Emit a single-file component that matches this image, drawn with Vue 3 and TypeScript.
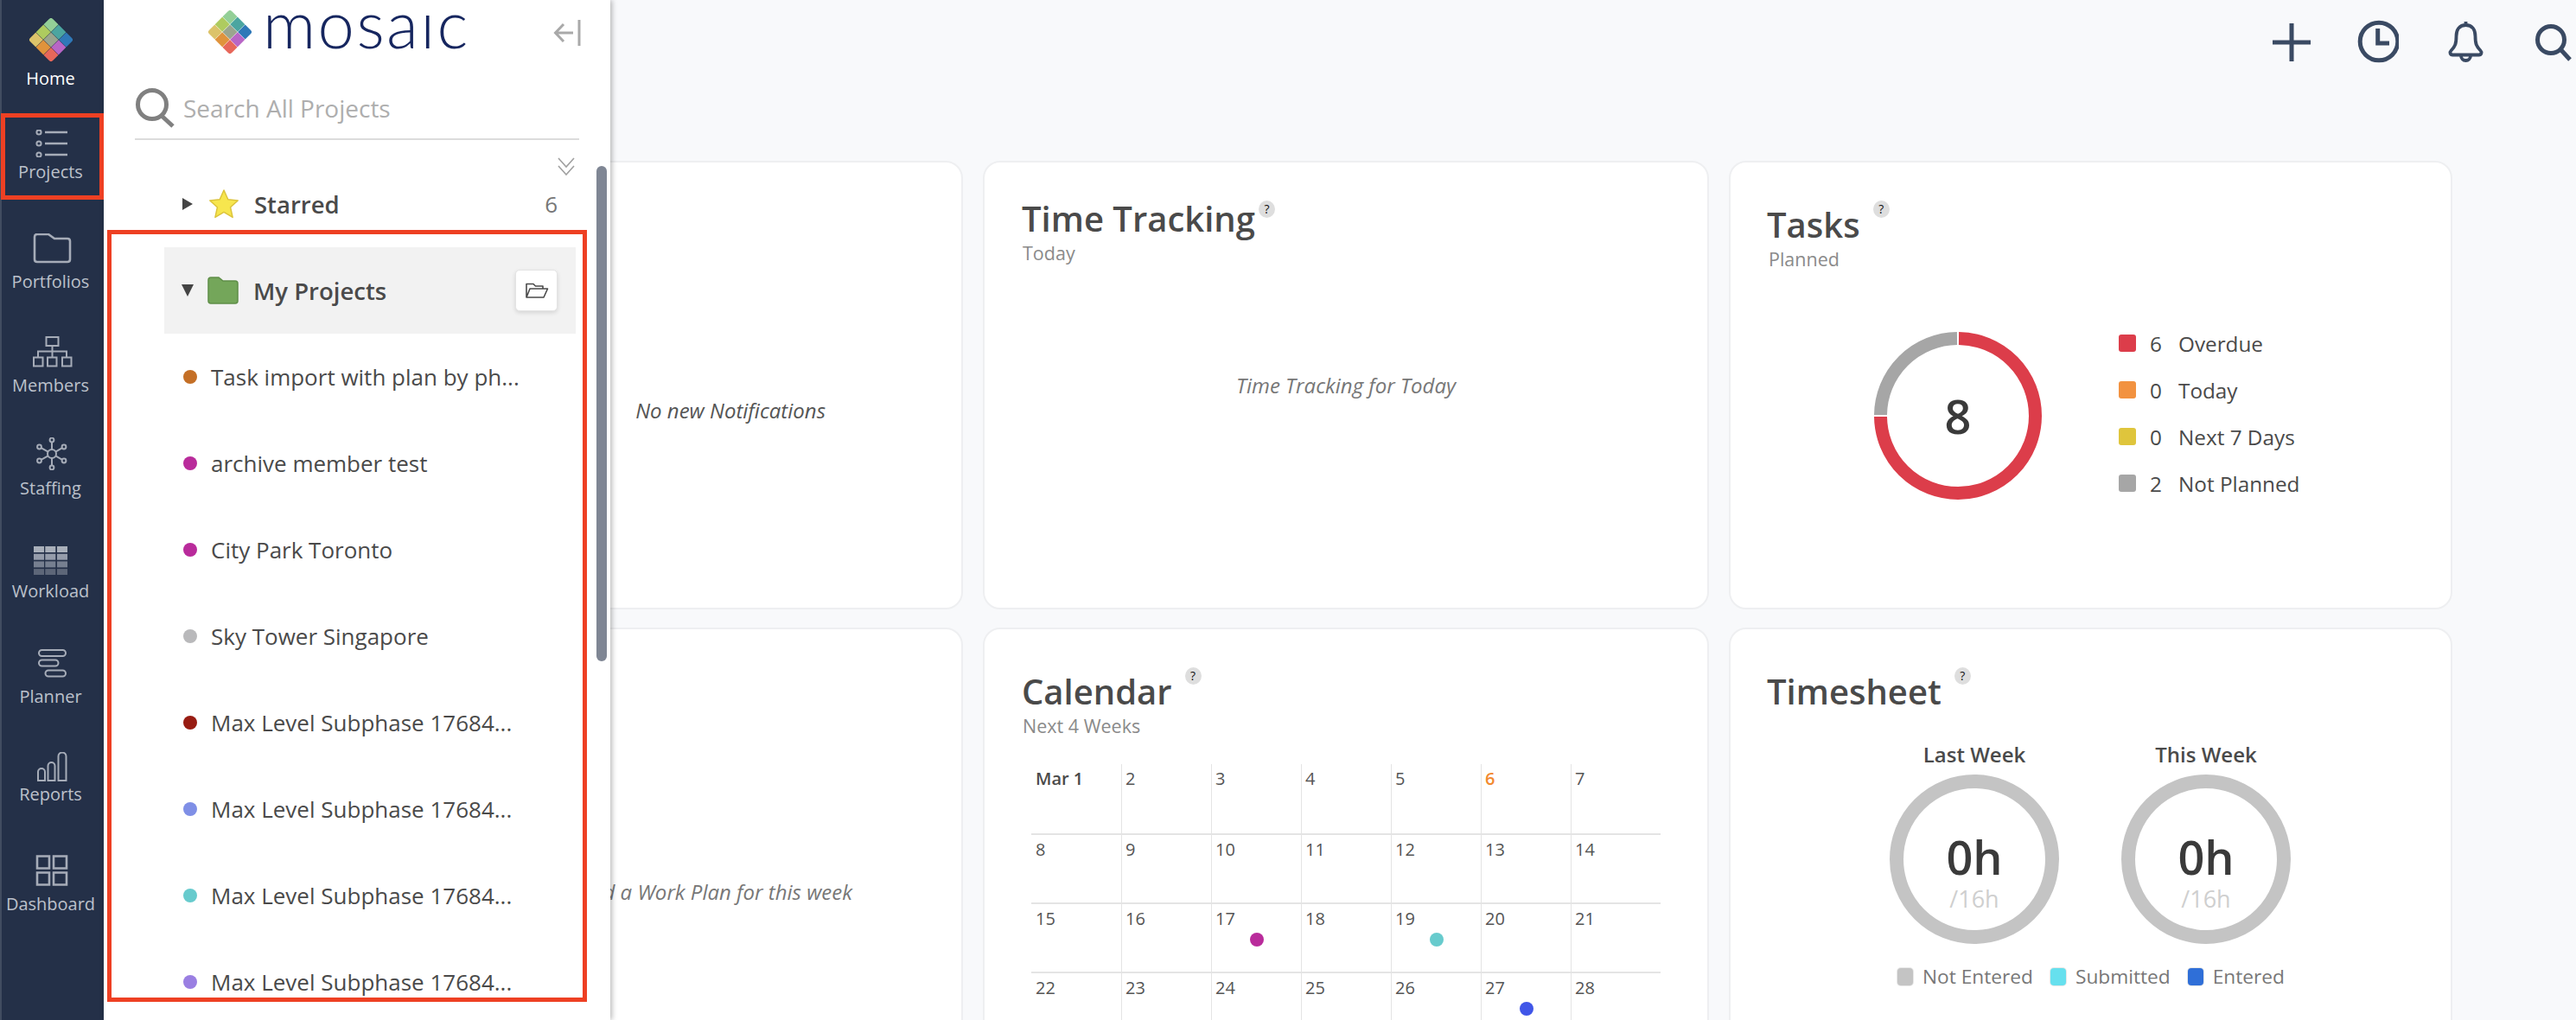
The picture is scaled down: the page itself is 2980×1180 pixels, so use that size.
<script setup lang="ts">
const logoCells = [
  ['#93cf97', '#4ba5a0', '#2f78b8'],
  ['#aecb5f', '#9aa58e', '#b866c6'],
  ['#dcc36a', '#e0933c', '#e7675a'],
].flatMap((row, r) => row.map((fill, c) => ({ fill, x: c * 22.5 + 0.3, y: r * 22.5 + 0.3 })))

const workload = [0, 1, 2, 3].flatMap((r) =>
  [0, 1, 2].map((c) => ({
    x: [39, 52.3, 66][c],
    y: 632 + r * 8.7,
    fill: ['#a9afba', '#959cab', '#767f90', '#5d6678'][r],
  })),
)

const projects = [
  { name: 'Task import with plan by ph...', color: '#c46f26' },
  { name: 'archive member test', color: '#b92b9b' },
  { name: 'City Park Toronto', color: '#b92b9b' },
  { name: 'Sky Tower Singapore', color: '#b9b9bb' },
  { name: 'Max Level Subphase 17684...', color: '#981c12' },
  { name: 'Max Level Subphase 17684...', color: '#7f8fe6' },
  { name: 'Max Level Subphase 17684...', color: '#67cbcd' },
  { name: 'Max Level Subphase 17684...', color: '#9a7fe2' },
]

const taskLegend = [
  { n: 6, label: 'Overdue', color: '#dc3d4a' },
  { n: 0, label: 'Today', color: '#f29240' },
  { n: 0, label: 'Next 7 Days', color: '#dfc53c' },
  { n: 2, label: 'Not Planned', color: '#a6a6a6' },
]

const sheetLegend = [
  { label: 'Not Entered', color: '#c4c4c4' },
  { label: 'Submitted', color: '#66e0ee' },
  { label: 'Entered', color: '#2f6fd8' },
]

const dots: Record<number, string> = { 17: '#b92b9b', 19: '#67cbcd', 27: '#4056e8' }
const days = Array.from({ length: 28 }, (_, i) => i + 1).map((d) => ({
  d,
  text: d === 1 ? 'Mar 1' : String(d),
  dot: dots[d],
}))
const weeks = ['Last Week', 'This Week']
</script>

<template>
  <div class="page">
    <nav class="nav">
      <div class="item n-home">
        <svg width="120" height="50" viewBox="0 0 120 50">
          <defs>
            <clipPath id="logoclip"><rect width="67.5" height="67.5" rx="7" /></clipPath>
          </defs>
          <svg x="34" y="0" width="50" height="50" viewBox="5 5 90 90">
            <g transform="translate(50 50) rotate(45) translate(-33.75 -33.75)" clip-path="url(#logoclip)">
              <rect v-for="(c, i) in logoCells" :key="i" :x="c.x" :y="c.y" width="21.9" height="21.9" :fill="c.fill" />
            </g>
          </svg>
        </svg>
        <span class="lbl home-lbl">Home</span>
      </div>
      <div class="item n-projects">
        <svg width="120" height="32" viewBox="0 150 120 32" class="ic">
          <circle cx="45" cy="153" r="2.6" /><circle cx="45" cy="166" r="2.6" /><circle cx="45" cy="179" r="2.6" />
          <path d="M52 153H78M52 166H78M52 179H78" stroke-width="2.6" />
        </svg>
        <span class="lbl">Projects</span>
      </div>
      <div class="item n-portfolios">
        <svg width="120" height="35" viewBox="0 270 120 35" class="ic">
          <path d="M40 274q0-3 3-3h13l7 5h15q3 0 3 3v21q0 3-3 3H43q-3 0-3-3z" stroke-width="2.6" />
        </svg>
        <span class="lbl">Portfolios</span>
      </div>
      <div class="item n-members">
        <svg width="120" height="36" viewBox="0 389 120 36" class="ic">
          <rect x="53.5" y="390" width="14" height="10" />
          <rect x="39" y="413.5" width="10.5" height="10" /><rect x="55" y="413.5" width="10.5" height="10" /><rect x="72" y="413.5" width="10.5" height="10" />
          <path d="M60.5 400V413.5M44 413.5V406.5H77V413.5" />
        </svg>
        <span class="lbl">Members</span>
      </div>
      <div class="item n-staffing">
        <svg width="120" height="38" viewBox="0 506 120 38" class="ic">
          <circle cx="60" cy="525" r="5" />
          <circle cx="60" cy="509" r="2.4" /><circle cx="60" cy="541" r="2.4" />
          <circle cx="45.5" cy="517" r="2.4" /><circle cx="74" cy="517" r="2.4" />
          <circle cx="45.5" cy="533" r="2.4" /><circle cx="74" cy="533" r="2.4" />
          <path d="M60 511.5V520M60 530V538.5M47.6 518.2L55.6 522.6M72 518.2L64.4 522.6M47.6 531.8L55.6 527.4M72 531.8L64.4 527.4" />
        </svg>
        <span class="lbl">Staffing</span>
      </div>
      <div class="item n-workload">
        <svg width="120" height="33" viewBox="0 632 120 33">
          <rect v-for="(c, i) in workload" :key="i" :x="c.x" :y="c.y" width="12" height="7" :fill="c.fill" />
        </svg>
        <span class="lbl">Workload</span>
      </div>
      <div class="item n-planner">
        <svg width="120" height="33" viewBox="0 751 120 33" class="ic">
          <rect x="45" y="752" width="31" height="7" rx="3.5" />
          <rect x="45" y="763.5" width="22.5" height="7" rx="3.5" />
          <rect x="52.5" y="775.5" width="23.5" height="7" rx="3.5" />
        </svg>
        <span class="lbl">Planner</span>
      </div>
      <div class="item n-reports">
        <svg width="120" height="34" viewBox="0 870 120 34" class="ic">
          <path d="M44 903V893a4 4 0 0 1 8 0V903zM55.5 903V886a4 4 0 0 1 8 0V903zM67.5 903V875a4.500 4.500 0 0 1 9 0V903z" />
        </svg>
        <span class="lbl">Reports</span>
      </div>
      <div class="item n-dashboard">
        <svg width="120" height="36" viewBox="0 989 120 36" class="ic">
          <path stroke-width="2.6" d="M43 990.500H57V1004.500H43zM62 990.500H77V1004.500H62zM43 1009.500H57V1023.500H43zM62 1009.500H77V1023.500H62z" />
        </svg>
        <span class="lbl">Dashboard</span>
      </div>
    </nav>

    <main class="main">
      <header class="top">
        <svg width="48" height="56" viewBox="0 0 48 56" class="tic"><path d="M24 7V51M2 29H46" /></svg>
        <svg width="48" height="56" viewBox="-1 0 48 56" class="tic"><circle cx="24" cy="28" r="21.800" /><path d="M22.700 13V30H36" /></svg>
        <svg width="48" height="56" viewBox="-1 0 48 56" class="tic bell">
          <path d="M24.500 9c-7.500 0-11 5.500-11 13 0 9-1.500 12-6 16.500-2 2-1 5 1.800 5h30.400c2.800 0 3.800-3 1.800-5-4.500-4.500-6-7.500-6-16.500 0-7.500-3.500-13-11-13z" />
          <path d="M19 44.500a5.500 5.500 0 0 0 11 0M24.500 5V9" />
        </svg>
        <svg width="48" height="56" viewBox="0 0 48 56" class="tic"><circle cx="24" cy="26" r="15.500" /><path d="M35 37L46 49" /></svg>
      </header>
      <section class="grid">
        <article class="card">
          <p class="empty notif">No new Notifications</p>
        </article>
        <article class="card tt">
          <div class="head"><h2>Time Tracking</h2><i class="q">?</i></div>
          <div class="sub">Today</div>
          <p class="empty none-today">Time Tracking for Today</p>
        </article>
        <article class="card">
          <div class="head gap"><h2>Tasks</h2><i class="q">?</i></div>
          <div class="sub">Planned</div>
          <div class="tasks">
            <div class="donut">
              <svg width="194" height="194" viewBox="0 0 194 194" fill="none" stroke-width="15">
                <path d="M7.500 96A89.500 89.500 0 0 1 96 7.500" stroke="#a6a6a6" />
                <path d="M98 7.500A89.500 89.500 0 1 1 7.500 98" stroke="#dc3d4a" />
              </svg>
              <span>8</span>
            </div>
            <ul class="legend">
              <li v-for="l in taskLegend" :key="l.label">
                <b class="sq" :style="{ background: l.color }"></b>
                <span class="num">{{ l.n }}</span>
                <span>{{ l.label }}</span>
              </li>
            </ul>
          </div>
        </article>
        <article class="card">
          <p class="empty plan">d a Work Plan for this week</p>
        </article>
        <article class="card calendar">
          <div class="head gap"><h2>Calendar</h2><i class="q">?</i></div>
          <div class="sub">Next 4 Weeks</div>
          <div class="cal">
            <div v-for="c in days" :key="c.d" class="cell" :class="{ first: c.d === 1, now: c.d === 6 }">
              <span>{{ c.text }}</span>
              <b v-if="c.dot" class="caldot" :style="{ background: c.dot }"></b>
            </div>
          </div>
        </article>
        <article class="card">
          <div class="head gap"><h2>Timesheet</h2><i class="q">?</i></div>
          <div class="weeks">
            <div v-for="w in weeks" :key="w" class="week">
              <div class="wlabel">{{ w }}</div>
              <div class="ring">
                <strong>0h</strong>
                <small>/16h</small>
              </div>
            </div>
          </div>
          <div class="slegend">
            <span v-for="l in sheetLegend" :key="l.label" class="sitem">
              <b class="ssq" :style="{ background: l.color }"></b>{{ l.label }}
            </span>
          </div>
        </article>
      </section>
    </main>

    <aside class="panel">
      <div class="brand">
        <svg width="50" height="50" viewBox="5 5 90 90">
          <g transform="translate(50 50) rotate(45) translate(-33.75 -33.75)" clip-path="url(#logoclip)">
            <rect v-for="(c, i) in logoCells" :key="i" :x="c.x" :y="c.y" width="21.9" height="21.9" :fill="c.fill" />
          </g>
        </svg>
        <span class="word" aria-label="mosaic">mosaıc</span>
        <svg class="collapse" width="34" height="32" viewBox="0 0 34 32" fill="none" stroke="#a9a9a9" stroke-width="3">
          <path d="M23 16H3M12 6L2.500 16L12 26" /><path d="M30 1V31" />
        </svg>
      </div>
      <div class="search">
        <svg width="46" height="46" viewBox="0 0 46 46" fill="none" stroke="#808080" stroke-width="5">
          <circle cx="20" cy="19" r="16.500" /><path d="M31 32L44 44" />
        </svg>
        <span>Search All Projects</span>
      </div>
      <div class="expand">
        <svg width="20" height="21" viewBox="0 0 20 21" fill="none" stroke="#a0a0a0" stroke-width="1.600">
          <path d="M1 1L10 11L19 1M1 10L10 20L19 10" />
        </svg>
      </div>
      <div class="starred">
        <b class="tri right"></b>
        <svg width="36" height="36" viewBox="0 0 36 36">
          <path d="M18 2l4.800 10.800 11.400 1.200-8.600 7.800 2.500 11.600L18 27.400 7.900 33.400l2.500-11.600L1.800 14l11.400-1.200z" fill="#f7e64e" stroke="#dcc43c" stroke-width="1.500" stroke-linejoin="round" />
        </svg>
        <span class="gname">Starred</span>
        <span class="count">6</span>
      </div>
      <div class="group">
        <b class="tri down"></b>
        <svg width="36" height="34" viewBox="0 0 36 34">
          <path d="M1 5q0-3 3-3h9l5 4h14q3 0 3 3v20q0 3-3 3H4q-3 0-3-3z" fill="#74a65a" stroke="#5f8f48" stroke-width="1.500" />
        </svg>
        <span class="gname">My Projects</span>
        <button class="open" type="button" aria-label="Open folder">
          <svg width="28" height="20" viewBox="0 0 28 20" fill="none" stroke="#4a4a4a" stroke-width="1.600" stroke-linejoin="round">
            <path d="M2 18V2.500h8l2.500 2.500H21V8M2 18L6 8H26.500L22 18z" />
          </svg>
        </button>
      </div>
      <ul class="list">
        <li v-for="(p, i) in projects" :key="i">
          <b class="pdot" :style="{ background: p.color }"></b>
          <span>{{ p.name }}</span>
        </li>
      </ul>
      <div class="thumb"></div>
    </aside>

    <div class="mark mark-nav"></div>
    <div class="mark mark-list"></div>
  </div>
</template>

<style>
html, body { margin: 0; background: #f8f9fb; }
</style>

<style scoped>
.page {
  position: relative;
  display: flex;
  width: 2980px;
  height: 1180px;
  overflow: hidden;
  background: #f8f9fb;
  font-family: "Open Sans", "Noto Sans", sans-serif;
  color: #4a4a4a;
}
svg { display: block; flex: none; }
ul { margin: 0; padding: 0; list-style: none; }

/* nav rail */
.nav {
  flex: none;
  width: 120px;
  box-sizing: border-box;
  background: #243048;
  box-shadow: inset 2px 0 0 #414c60;
  display: flex;
  flex-direction: column;
}
.item { display: flex; flex-direction: column; align-items: center; }
.ic { fill: none; stroke: #a6acb8; stroke-width: 2; }
.lbl { font-size: 20px; line-height: 28px; color: #bcc1cb; white-space: nowrap; margin-right: 3px; }
.home-lbl { color: #fff; }
.n-home { margin-top: 21px; } .n-home .lbl { margin-top: 6px; }
.n-projects { margin-top: 45px; } .n-projects .lbl { margin-top: 3px; }
.n-portfolios { margin-top: 57px; } .n-portfolios .lbl { margin-top: 7px; }
.n-members { margin-top: 49px; } .n-members .lbl { margin-top: 7px; }
.n-staffing { margin-top: 46px; } .n-staffing .lbl { margin-top: 7px; }
.n-workload { margin-top: 53px; } .n-workload .lbl { margin-top: 5px; }
.n-planner { margin-top: 53px; } .n-planner .lbl { margin-top: 8px; }
.n-reports { margin-top: 50px; } .n-reports .lbl { margin-top: 1px; }
.n-dashboard { margin-top: 56px; } .n-dashboard .lbl { margin-top: 7px; }

/* main */
.main { flex: 1; display: flex; flex-direction: column; padding-left: 154px; min-width: 0; }
.top { flex: none; height: 186px; box-sizing: border-box; display: flex; justify-content: flex-end; gap: 52px; padding: 20px 5px 0 0; }
.tic { fill: none; stroke: #3a4a63; stroke-width: 5; }
.bell { stroke-width: 3.8; }
.grid { display: grid; grid-template-columns: 840px 840px 837px; grid-template-rows: 519px 519px; gap: 21px 23px; }
.card {
  box-sizing: border-box;
  background: #fff;
  border: 2px solid #eeeff1;
  border-radius: 20px;
  padding: 45px 42px 0;
}
.tt { padding: 38px 43px 0; }
.tt .sub { margin-left: 1px; }
.calendar { padding-left: 43px; }
.calendar .sub { margin-left: 1px; }
.head { display: flex; align-items: flex-start; gap: 4px; }
.head.gap { gap: 15px; }
h2 { margin: 0; font-size: 40px; line-height: 54px; font-weight: 600; color: #4a4a4a; white-space: nowrap; }
.q {
  width: 19px; height: 20px; margin-top: -1px; border-radius: 50%;
  background: #dedede; color: #111; font: normal 14px/20px "Open Sans", sans-serif; text-align: center;
}
.tt .q { margin-top: 6px; }
.sub { margin-left: 2px; font-size: 21.5px; line-height: 26px; color: #8a8a8a; }
.empty { margin: 0; font-size: 24px; line-height: 32px; font-style: italic; white-space: nowrap; }
.notif { text-align: right; margin-top: 226px; padding-right: 115px; color: #555; }
.plan { text-align: right; margin-top: 243px; padding-right: 84px; color: #777; }
.none-today { text-align: center; margin-top: 124px; color: #777; }

/* tasks */
.tasks { display: flex; align-items: flex-start; gap: 89px; margin-top: 57px; padding-left: 124px; }
.donut { display: grid; place-items: center; margin-top: 14px; }
.donut > * { grid-area: 1 / 1; }
.donut span { font-size: 54px; font-weight: 600; color: #3a3a3a; }
.legend li { display: flex; align-items: center; height: 54px; font-size: 24.3px; color: #4a4a4a; white-space: nowrap; }
.sq { width: 20px; height: 20px; border-radius: 3px; margin-right: 16px; }
.num { width: 33px; }

/* calendar */
.cal { display: grid; grid-template-columns: repeat(7, 104px); grid-auto-rows: 80px; margin: 31px 0 0 11px; }
.cell {
  box-sizing: border-box;
  display: flex; flex-direction: column;
  padding: 4px 0 0 4px;
  border-left: 1px solid #e4e4e4;
  border-top: 2px solid #e4e4e4;
  font-size: 20px; line-height: 26px; color: #555;
}
.cell:nth-child(-n+7) { border-top: 0; }
.cell:nth-child(7n+1) { border-left: 0; padding-left: 5px; }
.cell.first { font-weight: 600; color: #4a4a4a; }
.cell.now { color: #f28a30; font-weight: 600; }
.caldot { width: 16px; height: 16px; border-radius: 50%; align-self: center; margin: 3px 0 0 -4px; }

/* timesheet */
.weeks { display: flex; gap: 72px; margin: 31px 0 0 142px; }
.week { width: 196px; display: flex; flex-direction: column; align-items: center; gap: 8px; }
.wlabel { font-size: 24px; line-height: 30px; font-weight: 600; color: #4a4a4a; white-space: nowrap; }
.ring {
  box-sizing: border-box;
  width: 196px; height: 196px; border: 16px solid #c4c4c4; border-radius: 50%;
  display: flex; flex-direction: column; align-items: center; padding-top: 46px;
}
.ring strong { font-size: 54px; line-height: 66px; font-weight: 600; color: #3a3a3a; }
.ring small { font-size: 27px; line-height: 32px; color: #cfcfcf; }
.slegend { display: flex; gap: 20px; margin: 24px 0 0 151px; }
.sitem { display: flex; align-items: center; font-size: 22.7px; line-height: 28px; color: #777; white-space: nowrap; }
.ssq { width: 18px; height: 20px; border-radius: 4px; margin-right: 11px; box-shadow: 0 0 0 1px #e8e8e8; }

/* side panel */
.panel {
  position: absolute;
  left: 120px; top: 0;
  width: 586px; height: 1180px;
  background: #fff;
  box-shadow: 2px 0 6px rgba(0, 0, 0, .28);
  overflow: hidden;
  display: flex;
  flex-direction: column;
}
.brand { flex: none; height: 76px; box-sizing: border-box; display: flex; align-items: flex-start; padding: 12px 32px 0 121px; }
.word {
  margin: -35px 0 0 13px; font-family: Lato, sans-serif; font-weight: 300; font-size: 76px; line-height: 100px;
  color: #16265f; letter-spacing: 2.4px;
}
.collapse { margin: 10px 0 0 auto; }
.search {
  flex: none; box-sizing: border-box; height: 66px; margin: 20px 36px 0; padding-bottom: 6px;
  display: flex; align-items: center; gap: 10px;
  border-bottom: 2px solid #dcdcdc;
  font-size: 28px; color: #aeaeae;
}
.expand { flex: none; display: flex; justify-content: flex-end; margin-top: 20px; padding-right: 41px; }
.starred, .group { flex: none; display: flex; align-items: center; }
.starred { height: 66px; margin-bottom: 17px; padding: 0 61px 0 91px; }
.group { height: 100px; margin: 0 40px 0 70px; padding: 0 21px 0 20px; background: #f2f2f2; }
.tri { flex: none; width: 0; height: 0; border-style: solid; border-color: transparent; }
.tri.right { border-width: 7px 0 7px 12px; border-left-color: #444; margin-right: 18px; }
.tri.down { border-width: 14px 7px 0; border-top-color: #444; margin-right: 16px; }
.gname { margin-left: 17px; font-size: 27.5px; font-weight: 600; color: #4a4a4a; white-space: nowrap; }
.count { margin-left: auto; font-size: 26px; color: #777; }
.open {
  margin-left: auto; width: 49px; height: 48px; padding: 0; display: flex; align-items: center; justify-content: center;
  background: #fff; border: 1px solid #e4e4e4; border-radius: 5px; box-shadow: 0 2px 5px rgba(0, 0, 0, .12);
}
.list { flex: none; }
.list li { display: flex; align-items: center; gap: 16px; height: 100px; padding-left: 92px; font-size: 26px; color: #4a4a4a; white-space: nowrap; }
.pdot { width: 16px; height: 16px; border-radius: 50%; flex: none; }
.thumb { position: absolute; left: 570px; top: 192px; width: 12px; height: 573px; border-radius: 6px; background: #7f8694; }

/* annotation rectangles */
.mark { position: absolute; box-sizing: border-box; border: 5px solid #ee4023; pointer-events: none; }
.mark-nav { left: 1px; top: 131px; width: 119px; height: 100px; }
.mark-list { left: 124px; top: 266px; width: 555px; height: 893px; }
</style>
